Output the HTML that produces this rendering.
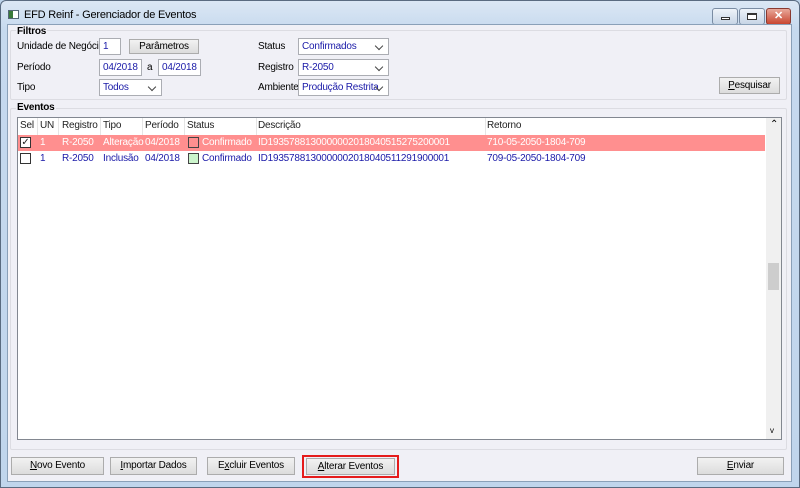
<!DOCTYPE html>
<html><head><style>
*{margin:0;padding:0;box-sizing:border-box}
body{width:800px;height:488px;background:#bcd3ea;font:10px "Liberation Sans",sans-serif;letter-spacing:-0.2px;color:#000;position:relative;overflow:hidden;white-space:nowrap}
.a{position:absolute}
.win{left:0;top:0;width:800px;height:488px;background:linear-gradient(#dbe7f4,#c6d9ee 30px,#c0d5ec);border:1px solid #5a6b80;border-radius:6px 6px 0 0}
.client{left:7px;top:24px;width:785px;height:458px;background:#f0f0f6;border:1px solid #8aa0b8}
.grp{border:1px solid #dcdce2;border-radius:2px}
.lbl{font-weight:bold}
.inp{background:#fff;border:1px solid #abadb3;color:#1a1aa8;padding:2px 3px;height:17px;line-height:12px}
.btn{background:linear-gradient(#f2f2f2,#dcdcdc);border:1px solid #acacac;text-align:center;line-height:15px;height:17px}
.sel::after{content:"";position:absolute;right:6px;top:4px;width:5px;height:5px;border-right:1px solid #444;border-bottom:1px solid #444;transform:rotate(45deg)}
.row{left:18px;width:747px;height:16px;line-height:16px}
.row span{position:absolute}
.cb{width:11px;height:11px;border:1px solid #333;background:#fff;top:2px}
.sw{width:11px;height:11px;border:1px solid #444;top:2px}
.tb{width:26px;height:17px;top:8px;border:1px solid #7a8ca3;border-radius:3px;background:linear-gradient(#eef3f9,#c7d5e6)}
</style></head><body>
<div class="a win"></div>
<div class="a" style="left:8px;top:10px;width:11px;height:9px;border:1px solid #567;background:#fff"></div>
<div class="a" style="left:9px;top:11px;width:4px;height:7px;background:#3a7a3a"></div>
<div class="a" style="left:24px;top:9px;font-size:11px">EFD Reinf - Gerenciador de Eventos</div>
<div class="a tb" style="left:712px"><div class="a" style="left:8px;top:8px;width:9px;height:3px;border:1px solid #333;background:#fff"></div></div>
<div class="a tb" style="left:739px"><div class="a" style="left:7px;top:4px;width:10px;height:7px;border:1px solid #333;border-top-width:2px;background:#fff"></div></div>
<div class="a tb" style="left:766px;width:25px;background:linear-gradient(#e8a89a,#c9452f);border-color:#8a3a30;color:#fff;font-weight:bold;text-align:center;line-height:15px;font-size:11px">✕</div>
<div class="a client"></div>

<div class="a grp" style="left:10px;top:30px;width:777px;height:70px"></div>
<div class="a lbl" style="left:16px;top:26px;background:#f0f0f6;padding:0 1px">Filtros</div>
<div class="a" style="left:17px;top:41px">Unidade de Negócio</div>
<div class="a inp" style="left:99px;top:38px;width:22px">1</div>
<div class="a btn" style="left:129px;top:39px;width:70px;height:15px;line-height:13px">Parâmetros</div>
<div class="a" style="left:17px;top:62px">Período</div>
<div class="a inp" style="left:99px;top:59px;width:43px">04/2018</div>
<div class="a" style="left:147px;top:62px">a</div>
<div class="a inp" style="left:158px;top:59px;width:43px">04/2018</div>
<div class="a" style="left:17px;top:82px">Tipo</div>
<div class="a inp sel" style="left:99px;top:79px;width:63px">Todos</div>
<div class="a" style="left:258px;top:41px">Status</div>
<div class="a inp sel" style="left:298px;top:38px;width:91px">Confirmados</div>
<div class="a" style="left:258px;top:62px">Registro</div>
<div class="a inp sel" style="left:298px;top:59px;width:91px">R-2050</div>
<div class="a" style="left:258px;top:82px">Ambiente</div>
<div class="a inp sel" style="left:298px;top:79px;width:91px">Produção Restrita</div>
<div class="a btn" style="left:719px;top:77px;width:61px"><u>P</u>esquisar</div>

<div class="a grp" style="left:10px;top:108px;width:777px;height:342px"></div>
<div class="a lbl" style="left:16px;top:102px;background:#f0f0f6;padding:0 1px">Eventos</div>
<div class="a" style="left:17px;top:117px;width:765px;height:323px;background:#fff;border:1px solid #828790"></div>
<div class="a" style="left:766px;top:118px;width:15px;height:321px;background:#f0f0f0"></div>
<div class="a" style="left:768px;top:263px;width:11px;height:27px;background:#cdcdcd"></div>
<div class="a" style="left:770px;top:119px;font-size:10px">⌃</div>
<div class="a" style="left:770px;top:426px;font-size:8px">v</div>
<div class="a row" style="top:118px;height:17px;color:#222">
<span style="left:2px">Sel</span><span style="left:22px">UN</span><span style="left:44px">Registro</span><span style="left:85px">Tipo</span><span style="left:127px">Período</span><span style="left:169px">Status</span><span style="left:240px">Descrição</span><span style="left:469px">Retorno</span>
<span style="left:19px;top:0;height:17px;border-left:1px solid #e5e5e5"></span><span style="left:40px;height:17px;border-left:1px solid #e5e5e5"></span><span style="left:82px;height:17px;border-left:1px solid #e5e5e5"></span><span style="left:124px;height:17px;border-left:1px solid #e5e5e5"></span><span style="left:166px;height:17px;border-left:1px solid #e5e5e5"></span><span style="left:238px;height:17px;border-left:1px solid #e5e5e5"></span><span style="left:467px;height:17px;border-left:1px solid #e5e5e5"></span>
</div>
<div class="a row" style="top:135px;background:#ff8f8f;color:#fff">
<span class="cb" style="left:2px;font-size:10px;line-height:9px;color:#222;text-align:center">✓</span><span style="left:22px">1</span><span style="left:44px">R-2050</span><span style="left:85px">Alteração</span><span style="left:127px">04/2018</span><span class="sw" style="left:170px;background:#ff8f8f"></span><span style="left:184px">Confirmado</span><span style="left:240px">ID1935788130000002018040515275200001</span><span style="left:469px">710-05-2050-1804-709</span>
</div>
<div class="a row" style="top:151px;color:#1a1aa8">
<span class="cb" style="left:2px"></span><span style="left:22px">1</span><span style="left:44px">R-2050</span><span style="left:85px">Inclusão</span><span style="left:127px">04/2018</span><span class="sw" style="left:170px;background:#ccf5cc"></span><span style="left:184px">Confirmado</span><span style="left:240px">ID1935788130000002018040511291900001</span><span style="left:469px">709-05-2050-1804-709</span>
</div>

<div class="a btn" style="left:11px;top:457px;width:93px;height:18px"><u>N</u>ovo Evento</div>
<div class="a btn" style="left:110px;top:457px;width:87px;height:18px"><u>I</u>mportar Dados</div>
<div class="a btn" style="left:207px;top:457px;width:88px;height:18px">E<u>x</u>cluir Eventos</div>
<div class="a" style="left:302px;top:455px;width:97px;height:23px;border:2px solid #e51b1b"></div>
<div class="a btn" style="left:306px;top:458px;width:89px;height:17px"><u>A</u>lterar Eventos</div>
<div class="a btn" style="left:697px;top:457px;width:87px;height:18px"><u>E</u>nviar</div>
</body></html>
